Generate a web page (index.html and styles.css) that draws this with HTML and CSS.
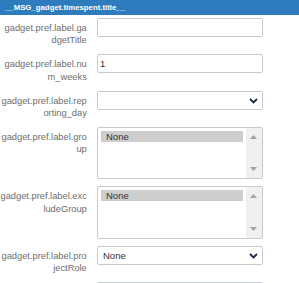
FILE: index.html
```html
<!DOCTYPE html>
<html lang="en">
<head>
  <meta charset="UTF-8">
  <title>Timespent gadget preferences</title>
  <link rel="stylesheet" href="styles.css">
</head>
<body>
  <div class="gadget-header">__MSG_gadget.timespent.title__</div>

  <form class="prefs">
    <div class="pref-row">
      <label class="pref-label">gadget.pref.label.gadgetTitle</label>
      <div class="pref-field"><input class="pref-input" type="text" value=""></div>
    </div>

    <div class="pref-row">
      <label class="pref-label">gadget.pref.label.num_weeks</label>
      <div class="pref-field"><input class="pref-input" type="text" value="1"></div>
    </div>

    <div class="pref-row">
      <label class="pref-label">gadget.pref.label.reporting_day</label>
      <div class="pref-field">
        <div class="select-wrap">
          <select class="pref-select"><option></option></select>
          <svg class="chevron" width="9" height="6" viewBox="0 0 9 6"><path d="M1 1l3.5 3.5L8 1" fill="none" stroke="#1e2b47" stroke-width="1.8"/></svg>
        </div>
      </div>
    </div>

    <div class="pref-row">
      <label class="pref-label">gadget.pref.label.group</label>
      <div class="pref-field">
        <div class="listbox">
          <div class="listbox-options">
            <div class="listbox-option selected">None</div>
          </div>
          <div class="listbox-scroll">
            <svg width="7" height="4" viewBox="0 0 7 4"><path d="M0 4L3.5 0L7 4z" fill="#a3a3a3"/></svg>
            <svg width="7" height="4" viewBox="0 0 7 4"><path d="M0 0L3.5 4L7 0z" fill="#a3a3a3"/></svg>
          </div>
        </div>
      </div>
    </div>

    <div class="pref-row">
      <label class="pref-label">gadget.pref.label.excludeGroup</label>
      <div class="pref-field">
        <div class="listbox">
          <div class="listbox-options">
            <div class="listbox-option selected">None</div>
          </div>
          <div class="listbox-scroll">
            <svg width="7" height="4" viewBox="0 0 7 4"><path d="M0 4L3.5 0L7 4z" fill="#a3a3a3"/></svg>
            <svg width="7" height="4" viewBox="0 0 7 4"><path d="M0 0L3.5 4L7 0z" fill="#a3a3a3"/></svg>
          </div>
        </div>
      </div>
    </div>

    <div class="pref-row">
      <label class="pref-label">gadget.pref.label.projectRole</label>
      <div class="pref-field">
        <div class="select-wrap">
          <select class="pref-select"><option>None</option></select>
          <svg class="chevron" width="9" height="6" viewBox="0 0 9 6"><path d="M1 1l3.5 3.5L8 1" fill="none" stroke="#1e2b47" stroke-width="1.8"/></svg>
        </div>
      </div>
    </div>

    <div class="pref-row">
      <label class="pref-label"></label>
      <div class="pref-field"><input class="pref-input" type="text" value=""></div>
    </div>
  </form>
</body>
</html>
```

FILE: styles.css
```css
body {
  margin: 0;
  background-color: #fff;
  font-family: "Liberation Sans", Arial, sans-serif;
  overflow: hidden;
}

.gadget-header {
  height: 15px;
  line-height: 15px;
  padding-left: 5px;
  background-color: #2e7bbe;
  color: #fff;
  font-size: 7.8px;
  font-weight: bold;
}

.prefs {
  margin: 0;
  padding-top: 3px;
}

.pref-row {
  display: flex;
  align-items: flex-start;
  margin-bottom: 7px;
}

.pref-label {
  width: 86.8px;
  min-height: 24.4px;
  flex: none;
  padding: 4px 0 1px 0;
  text-align: right;
  word-break: break-all;
  font-size: 9.3px;
  line-height: 12.2px;
  color: #6e6e6e;
}

.pref-field {
  margin-left: 10.2px;
  width: 166px;
}

.pref-input,
.pref-select {
  display: block;
  box-sizing: border-box;
  width: 166px;
  height: 19px;
  margin: 0;
  border: 1px solid #c5cad3;
  border-radius: 2px;
  background-color: #fff;
  font-family: "Liberation Sans", Arial, sans-serif;
  font-size: 9.5px;
  color: #333;
  outline: none;
}

.pref-input {
  padding: 0 2px;
}

.select-wrap {
  position: relative;
}

.pref-select {
  appearance: none;
  -webkit-appearance: none;
  padding: 0 0 0 5px;
}

.chevron {
  position: absolute;
  right: 5px;
  top: 7px;
}

.listbox {
  display: flex;
  box-sizing: border-box;
  width: 166px;
  height: 52.2px;
  border: 1px solid #c5cad3;
  border-radius: 2px;
}

.listbox-options {
  flex: 1;
  padding: 3px;
}

.listbox-option {
  height: 11px;
  line-height: 11px;
  padding-left: 5px;
  font-size: 9.5px;
  color: #333;
}

.listbox-option.selected {
  background-color: #cecece;
}

.listbox-scroll {
  width: 16px;
  display: flex;
  flex-direction: column;
  align-items: center;
  justify-content: space-between;
  padding: 7px 0 7px 0;
  background-color: #f0f0f0;
}
```
